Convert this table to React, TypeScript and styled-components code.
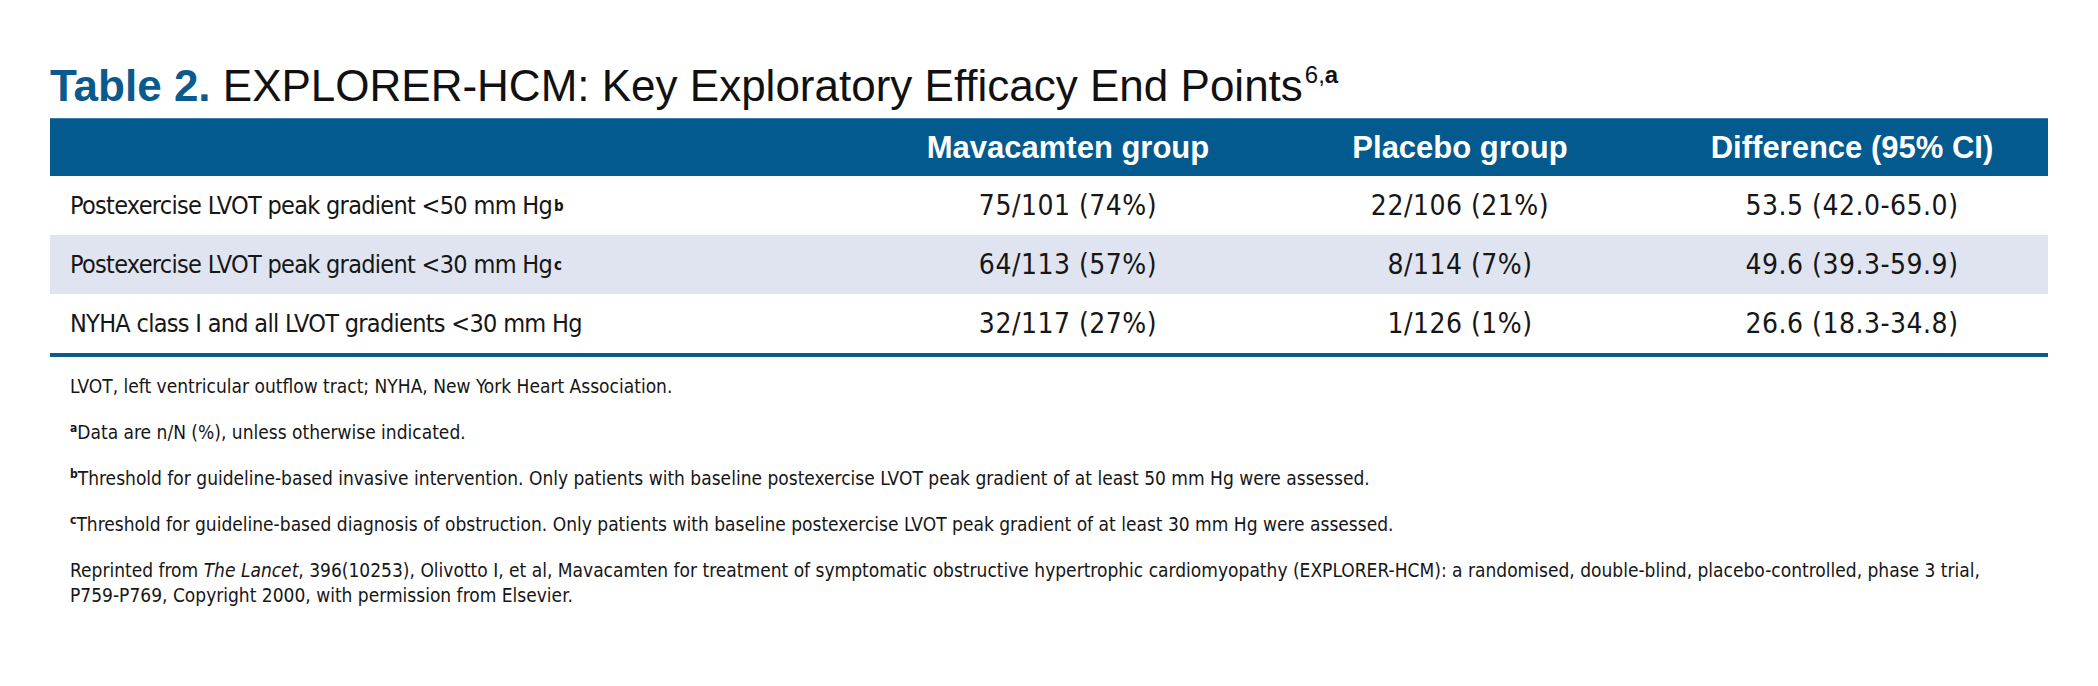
import { Fragment } from 'react';
import styled, { createGlobalStyle } from 'styled-components';

const GlobalStyle = createGlobalStyle`
  html, body {
    margin: 0;
    padding: 0;
    background: #ffffff;
  }
  body {
    font-family: 'Liberation Sans', Arial, sans-serif;
    color: #161616;
  }
`;

const Page = styled.div`
  padding: 60px 50px 0 50px;
  width: 1998px;
`;

const Title = styled.h1`
  margin: 0 0 6px 0;
  font-family: 'Liberation Sans', Arial, sans-serif;
  font-weight: 400;
  font-size: 44px;
  line-height: 52px;
  color: #111111;
  white-space: nowrap;
`;

const TitleLabel = styled.span`
  font-weight: 700;
  color: #0b5a8d;
`;

const TitleSup = styled.sup`
  font-size: 24px;
  line-height: 0;
  vertical-align: 18px;
  margin-left: 2px;
`;

const Grid = styled.div`
  display: grid;
  grid-template-columns: 822px repeat(3, 392px);
`;

const HeaderCell = styled.div`
  height: 57px;
  background: #025a8e;
  border-top: 1px solid #3f7fb0;
  display: flex;
  align-items: center;
  justify-content: center;
  color: #ffffff;
  font-weight: 700;
  font-size: 31px;
`;

const Cell = styled.div<{ $shaded?: boolean; $label?: boolean }>`
  height: 59px;
  display: flex;
  align-items: center;
  justify-content: ${({ $label }) => ($label ? 'flex-start' : 'center')};
  padding-left: ${({ $label }) => ($label ? '20px' : '0')};
  background: ${({ $shaded }) => ($shaded ? '#dfe4f0' : '#ffffff')};
  font-family: 'DejaVu Sans Condensed', 'DejaVu Sans', sans-serif;
  font-size: ${({ $label }) => ($label ? '25px' : '28px')};
  letter-spacing: ${({ $label }) => ($label ? '-0.7px' : '0.5px')};
  color: #161616;
`;

const Mark = styled.sup`
  font-size: 15px;
  font-weight: 700;
  line-height: 0;
  vertical-align: 10px;
  margin-left: 2px;
`;

const Rule = styled.div`
  height: 4px;
  background: #0b5a8d;
`;

const Notes = styled.div`
  padding: 17px 0 0 20px;
  display: flex;
  flex-direction: column;
  gap: 21px;
  font-family: 'DejaVu Sans Condensed', 'DejaVu Sans', sans-serif;
  font-size: 19px;
  line-height: 25px;
  color: #161616;
`;

const Note = styled.p`
  margin: 0;
`;

const NoteMark = styled.sup`
  font-size: 12px;
  font-weight: 700;
  line-height: 0;
  vertical-align: 7px;
`;

type Row = { label: string; mark?: string; mav: string; pla: string; diff: string };

const rows: Row[] = [
  { label: 'Postexercise LVOT peak gradient <50 mm Hg', mark: 'b', mav: '75/101 (74%)', pla: '22/106 (21%)', diff: '53.5 (42.0-65.0)' },
  { label: 'Postexercise LVOT peak gradient <30 mm Hg', mark: 'c', mav: '64/113 (57%)', pla: '8/114 (7%)', diff: '49.6 (39.3-59.9)' },
  { label: 'NYHA class I and all LVOT gradients <30 mm Hg', mav: '32/117 (27%)', pla: '1/126 (1%)', diff: '26.6 (18.3-34.8)' },
];

export default function App() {
  return (
    <>
      <GlobalStyle />
      <Page>
        <Title>
          <TitleLabel>Table 2.</TitleLabel> EXPLORER-HCM: Key Exploratory Efficacy End Points
          <TitleSup>
            6,<b>a</b>
          </TitleSup>
        </Title>
        <Grid>
          <HeaderCell />
          <HeaderCell>Mavacamten group</HeaderCell>
          <HeaderCell>Placebo group</HeaderCell>
          <HeaderCell>Difference (95% CI)</HeaderCell>
          {rows.map((r, i) => (
            <Fragment key={r.label}>
              <Cell $label $shaded={i === 1}>
                {r.label}
                {r.mark && <Mark>{r.mark}</Mark>}
              </Cell>
              <Cell $shaded={i === 1}>{r.mav}</Cell>
              <Cell $shaded={i === 1}>{r.pla}</Cell>
              <Cell $shaded={i === 1}>{r.diff}</Cell>
            </Fragment>
          ))}
        </Grid>
        <Rule />
        <Notes>
          <Note>LVOT, left ventricular outflow tract; NYHA, New York Heart Association.</Note>
          <Note>
            <NoteMark>a</NoteMark>Data are n/N (%), unless otherwise indicated.
          </Note>
          <Note>
            <NoteMark>b</NoteMark>Threshold for guideline-based invasive intervention. Only patients with baseline
            postexercise LVOT peak gradient of at least 50 mm Hg were assessed.
          </Note>
          <Note>
            <NoteMark>c</NoteMark>Threshold for guideline-based diagnosis of obstruction. Only patients with baseline
            postexercise LVOT peak gradient of at least 30 mm Hg were assessed.
          </Note>
          <Note>
            Reprinted from <i>The Lancet</i>, 396(10253), Olivotto I, et al, Mavacamten for treatment of symptomatic
            obstructive hypertrophic cardiomyopathy (EXPLORER-HCM): a randomised, double-blind, placebo-controlled,
            phase 3 trial,
            <br />
            P759-P769, Copyright 2000, with permission from Elsevier.
          </Note>
        </Notes>
      </Page>
    </>
  );
}
